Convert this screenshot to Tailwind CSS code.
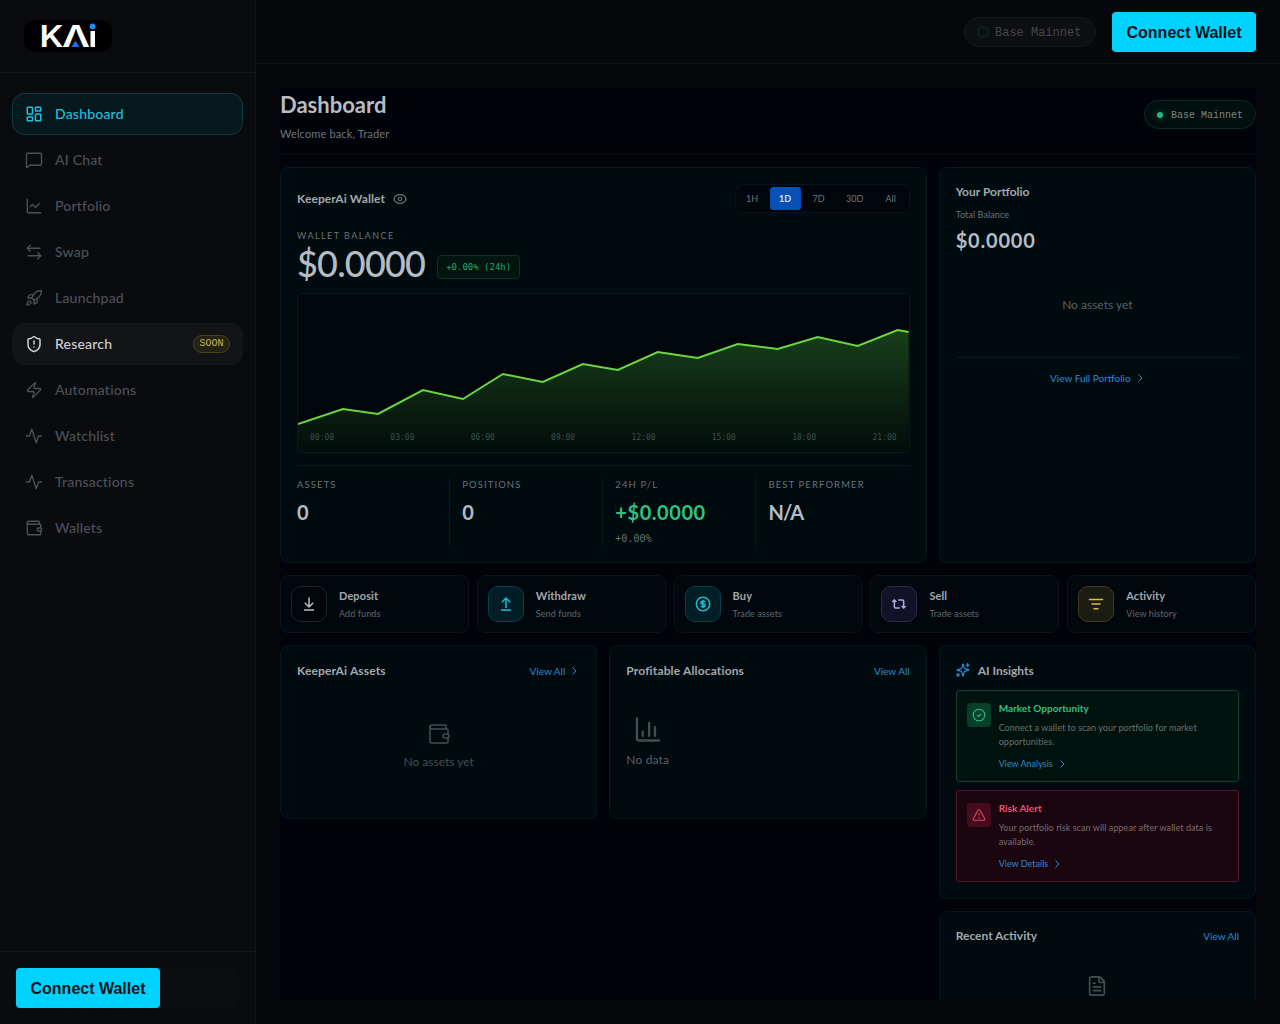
<!DOCTYPE html>
<html lang="en">
<head>
  <meta charset="UTF-8">
  <meta name="viewport" content="width=device-width, initial-scale=1.0">
  <title>KeeperAi Dashboard</title>
  <script src="https://cdn.jsdelivr.net/npm/@tailwindcss/browser@4"></script>
</head>
<body class="bg-[#07080b] font-[Lato,sans-serif] text-[#b4b9be]">
  <div class="flex h-[1024px] w-[1280px] overflow-hidden">

    <!-- Sidebar -->
    <aside class="flex w-64 shrink-0 flex-col border-r border-[#121419] bg-[#0a0b0f]">
      <div class="flex h-[73px] items-center border-b border-[#16181c] px-6">
        <div class="h-8 w-[88px] rounded-xl bg-black">
          <svg class="h-8 w-[88px] overflow-visible" viewBox="0 0 88 32" fill="#fff">
            <text x="15.500" y="27" font-family="Inter" font-weight="600" font-size="30" textLength="24" lengthAdjust="spacingAndGlyphs">K</text>
            <text x="38" y="27" font-family="Inter" font-weight="600" font-size="30" textLength="28" lengthAdjust="spacingAndGlyphs">Λ</text>
            <rect x="66.500" y="11" width="4.500" height="16"/>
            <circle cx="68.600" cy="6.400" r="2.800" fill="#1f8bf5"/>
            <path d="M51.500 20.500l4 6.500h-8z" fill="#1d6fe8"/>
          </svg>
        </div>
      </div>
      <nav class="flex flex-1 flex-col gap-1 px-3 pt-5 text-sm font-medium tracking-[.2px] text-[#4c5157]">
        <a class="flex h-[42px] items-center gap-3 rounded-xl border border-[#0c3a41] bg-[#08191e] px-3 text-[#1fc0de]">
          <svg class="size-[18px]" viewBox="0 0 24 24" fill="none" stroke="currentColor" stroke-width="2"><rect x="3" y="3" width="7" height="9" rx="1"/><rect x="14" y="3" width="7" height="5" rx="1"/><rect x="14" y="12" width="7" height="9" rx="1"/><rect x="3" y="16" width="7" height="5" rx="1"/></svg>
          <span>Dashboard</span>
        </a>
        <a class="flex h-[42px] items-center gap-3 px-[13px]">
          <svg class="size-[18px]" viewBox="0 0 24 24" fill="none" stroke="currentColor" stroke-width="1.8" stroke-linejoin="round"><path d="M22 17a2 2 0 0 1-2 2H6.800a2 2 0 0 0-1.400.6l-2.200 2.200A.7.7 0 0 1 2 21.300V5a2 2 0 0 1 2-2h16a2 2 0 0 1 2 2z"/></svg>
          <span>AI Chat</span>
        </a>
        <a class="flex h-[42px] items-center gap-3 px-[13px]">
          <svg class="size-[18px]" viewBox="0 0 24 24" fill="none" stroke="currentColor" stroke-width="1.8" stroke-linecap="round" stroke-linejoin="round"><path d="M3 3v16a2 2 0 0 0 2 2h16"/><path d="m19 9-5 5-4-4-3 3"/></svg>
          <span>Portfolio</span>
        </a>
        <a class="flex h-[42px] items-center gap-3 px-[13px]">
          <svg class="size-[18px]" viewBox="0 0 24 24" fill="none" stroke="currentColor" stroke-width="1.8" stroke-linecap="round" stroke-linejoin="round"><path d="M7 3 3 7l4 4"/><path d="M3 7h17"/><path d="m17 21 4-4-4-4"/><path d="M21 17H4"/></svg>
          <span>Swap</span>
        </a>
        <a class="flex h-[42px] items-center gap-3 px-[13px]">
          <svg class="size-[18px]" viewBox="0 0 24 24" fill="none" stroke="currentColor" stroke-width="1.8" stroke-linecap="round" stroke-linejoin="round"><path d="M4.500 16.500c-1.500 1.260-2 5-2 5s3.740-.5 5-2c.71-.84.7-2.130-.09-2.910a2.180 2.180 0 0 0-2.910-.09z"/><path d="m12 15-3-3a22 22 0 0 1 2-3.950A12.880 12.880 0 0 1 22 2c0 2.720-.78 7.500-6 11a22.350 22.350 0 0 1-4 2z"/><path d="M9 12H4s.55-3.030 2-4c1.620-1.080 5 0 5 0"/><path d="M12 15v5s3.030-.55 4-2c1.080-1.620 0-5 0-5"/></svg>
          <span>Launchpad</span>
        </a>
        <a class="flex h-[42px] items-center gap-3 rounded-xl bg-[#131418] px-[13px] text-[#d0d2d4]">
          <svg class="size-[18px]" viewBox="0 0 24 24" fill="none" stroke="currentColor" stroke-width="2" stroke-linecap="round" stroke-linejoin="round"><path d="M20 13c0 5-3.500 7.500-7.660 8.950a1 1 0 0 1-.67-.01C7.500 20.500 4 18 4 13V6a1 1 0 0 1 1-1c2 0 4.500-1.200 6.240-2.720a1.170 1.170 0 0 1 1.520 0C14.510 3.810 17 5 19 5a1 1 0 0 1 1 1z"/><path d="M12 8v4"/><path d="M12 16h.01"/></svg>
          <span>Research</span>
          <span class="ml-auto flex h-[18px] w-[37px] items-center justify-center rounded-full border border-[#4c4213] bg-[#252213] pt-px font-['Liberation_Mono',monospace] text-[10px] tracking-normal text-[#c9b75c]">SOON</span>
        </a>
        <a class="flex h-[42px] items-center gap-3 px-[13px]">
          <svg class="size-[18px]" viewBox="0 0 24 24" fill="none" stroke="currentColor" stroke-width="1.8" stroke-linecap="round" stroke-linejoin="round"><path d="M4 14a1 1 0 0 1-.78-1.630l9.900-10.200a.5.5 0 0 1 .86.46l-1.920 6.020A1 1 0 0 0 13 10h7a1 1 0 0 1 .78 1.630l-9.900 10.200a.5.5 0 0 1-.86-.46l1.920-6.020A1 1 0 0 0 11 14z"/></svg>
          <span>Automations</span>
        </a>
        <a class="flex h-[42px] items-center gap-3 px-[13px]">
          <svg class="size-[18px]" viewBox="0 0 24 24" fill="none" stroke="currentColor" stroke-width="1.8" stroke-linecap="round" stroke-linejoin="round"><path d="M22 12h-4l-3 9L9 3l-3 9H2"/></svg>
          <span>Watchlist</span>
        </a>
        <a class="flex h-[42px] items-center gap-3 px-[13px]">
          <svg class="size-[18px]" viewBox="0 0 24 24" fill="none" stroke="currentColor" stroke-width="1.8" stroke-linecap="round" stroke-linejoin="round"><path d="M22 12h-4l-3 9L9 3l-3 9H2"/></svg>
          <span>Transactions</span>
        </a>
        <a class="flex h-[42px] items-center gap-3 px-[13px]">
          <svg class="size-[18px]" viewBox="0 0 24 24" fill="none" stroke="currentColor" stroke-width="1.8" stroke-linecap="round" stroke-linejoin="round"><path d="M19 7V4a1 1 0 0 0-1-1H5a2 2 0 0 0 0 4h15a1 1 0 0 1 1 1v4h-3a2 2 0 0 0 0 4h3a1 1 0 0 0 1-1v-2a1 1 0 0 0-1-1"/><path d="M3 5v14a2 2 0 0 0 2 2h15a1 1 0 0 0 1-1v-4"/></svg>
          <span>Wallets</span>
        </a>
      </nav>
      <div class="flex h-[73px] border-t border-[#16181c] p-4">
        <div class="h-10 w-full rounded-lg bg-[#0c0d11]">
          <button class="h-10 w-36 rounded bg-[#00d2ff] pt-0.5 font-['Liberation_Sans',sans-serif] text-base font-bold text-[#06141c]">Connect Wallet</button>
        </div>
      </div>
    </aside>

    <div class="flex flex-1 flex-col">
      <!-- Top bar -->
      <header class="flex h-16 shrink-0 items-center justify-end gap-4 border-b border-[#111317] px-6">
        <div class="flex h-[30px] w-[132px] items-center gap-1.5 rounded-full border border-[#16181b] bg-[#0e0f12] pl-3 font-['Liberation_Mono',monospace] text-xs text-[#43464a]">
          <span class="size-3 rounded-full border-2 border-[#0b211c]"></span><span class="pt-0.5">Base Mainnet</span>
        </div>
        <button class="h-10 w-36 rounded bg-[#00d2ff] pt-0.5 font-['Liberation_Sans',sans-serif] text-base font-bold text-[#06141c]">Connect Wallet</button>
      </header>

      <main class="mx-6 mt-6 flex h-[912px] flex-col gap-3 overflow-hidden bg-[#00040a]">
        <div class="flex h-[67px] shrink-0 items-start justify-between border-b border-[#070c12]">
          <div>
            <h1 class="pt-px text-[22px] leading-8 font-bold text-[#b9bcc0]">Dashboard</h1>
            <p class="mt-[5px] text-[11px] leading-4 tracking-[.15px] text-[#6f7479]">Welcome back, Trader</p>
          </div>
          <div class="mt-3 flex h-[29px] w-28 items-center gap-2 rounded-full border border-[#0b2b20] bg-[#010f0e] pl-3 font-['Liberation_Mono',monospace] text-[10px] text-[#7d8583]">
            <span class="size-1.5 rounded-full bg-[#24b779] shadow-[0_0_6px_#0f6b45]"></span><span class="pt-px">Base Mainnet</span>
          </div>
        </div>

        <div class="grid shrink-0 grid-cols-3 gap-3">
          <!-- Wallet -->
          <section class="col-span-2 h-[396px] rounded-lg border border-[#07181c] bg-[#000b10] p-4">
            <div class="flex items-center justify-between">
              <h2 class="flex items-center gap-2 text-xs font-bold tracking-[.1px] text-[#a3a8ac]">KeeperAi Wallet
                <svg class="size-3.5 text-[#6b7378]" viewBox="0 0 24 24" fill="none" stroke="currentColor" stroke-width="2"><path d="M1.500 12C3 7 7.500 4.500 12 4.500S21 7 22.500 12C21 17 16.500 19.500 12 19.500S3 17 1.500 12z"/><circle cx="12" cy="12" r="3"/></svg>
              </h2>
              <div class="flex h-[29px] w-[175px] items-center rounded-lg border border-[#07151a] bg-[#00060b] text-[9px] text-[#70767b]">
                <span class="w-[34px] pr-px text-center">1H</span>
                <span class="flex h-[23px] w-[31px] items-center justify-center rounded-[3px] bg-[#0750b5] font-bold text-[#d6e0ec]">1D</span>
                <span class="w-9 text-center">7D</span>
                <span class="w-9 text-center">30D</span>
                <span class="w-9 text-center">All</span>
              </div>
            </div>
            <p class="mt-[15px] text-[9px] leading-4 tracking-[1.45px] text-[#6b7277]">WALLET BALANCE</p>
            <div class="flex h-10 items-center gap-3">
              <span class="-mt-0.5 text-4xl leading-10 font-medium tracking-[-.8px] text-[#b5bcc2]">$0.0000</span>
              <span class="mt-1.5 flex h-6 w-[83px] items-center justify-center rounded border border-[#0a3326] bg-[#01140f] pt-px font-['DejaVu_Sans_Mono',monospace] text-[9px] text-[#2aa870]">+0.00% (24h)</span>
            </div>
            <div class="relative mt-[9px] h-40 overflow-hidden rounded border border-[#07191c] bg-[#000609]">
              <svg class="h-[158px] w-full" viewBox="0 0 611 158" preserveAspectRatio="none" fill="none">
                <defs>
                  <linearGradient id="area" x1="0" y1="0" x2="0" y2="1">
                    <stop offset="0" stop-color="#52cc44" stop-opacity=".29"/>
                    <stop offset="1" stop-color="#52cc44" stop-opacity=".03"/>
                  </linearGradient>
                </defs>
                <path fill="url(#area)" d="M0 130 45 115 80 120 125 96 165 105 205 80 245 88 285 70 320 76 360 58 400 64 440 50 480 55 520 43 560 52 600 36 611 38V158H0z"/>
                <path stroke="#6cd63e" stroke-width="2" d="M0 130 45 115 80 120 125 96 165 105 205 80 245 88 285 70 320 76 360 58 400 64 440 50 480 55 520 43 560 52 600 36 611 38"/>
              </svg>
              <div class="absolute inset-x-3 bottom-[7px] flex justify-between font-['DejaVu_Sans_Mono',monospace] text-[8px] leading-[14px] text-[#3c4e4b]">
                <span>00:00</span><span>03:00</span><span>06:00</span><span>09:00</span><span>12:00</span><span>15:00</span><span>18:00</span><span>21:00</span>
              </div>
            </div>
            <div class="mt-3 grid grid-cols-4 border-t border-[#0a191d] pt-3 text-[9.5px] leading-[13px] text-[#6b7277]">
              <div class="h-[68px] border-r border-[#0c1a1f]"><p class="tracking-[1.1px]">ASSETS</p><p class="mt-[9px] text-xl leading-6 font-bold text-[#b5bcc2]">0</p></div>
              <div class="border-r border-[#0c1a1f] pl-3"><p class="tracking-[1.1px]">POSITIONS</p><p class="mt-[9px] text-xl leading-6 font-bold text-[#b5bcc2]">0</p></div>
              <div class="border-r border-[#0c1a1f] pl-3"><p class="tracking-[1.1px]">24H P/L</p><p class="mt-[9px] text-xl leading-6 font-bold tracking-[.55px] text-[#2fc17e]">+$0.0000</p><p class="mt-2 font-['DejaVu_Sans_Mono',monospace] text-[10px] leading-[14px]">+0.00%</p></div>
              <div class="pl-3"><p class="tracking-[1.1px]">BEST PERFORMER</p><p class="mt-[9px] text-xl leading-6 font-bold tracking-[-.9px] text-[#b5bcc2]">N/A</p></div>
            </div>
          </section>

          <!-- Portfolio -->
          <section class="rounded-lg border border-[#07181c] bg-[#000b10] px-4 pt-3.5">
            <h2 class="text-xs leading-5 font-bold text-[#a3a8ac]">Your Portfolio</h2>
            <p class="mt-1.5 text-[9px] leading-[14px] tracking-[.1px] text-[#6b7277]">Total Balance</p>
            <p class="mt-1.5 text-xl leading-6 font-bold tracking-[.8px] text-[#b5bcc2]">$0.0000</p>
            <p class="mt-[43px] text-center text-xs leading-5 text-[#5a6267]">No assets yet</p>
            <div class="mt-[42px] flex items-center justify-center gap-1 border-t border-[#0b191d] pt-[11px] text-[10px] leading-[18px] text-[#2b8ad4]">
              View Full Portfolio
              <svg class="size-2.5" viewBox="0 0 10 10" fill="none" stroke="currentColor"><path d="m3.500 1.500 3.500 3.500-3.500 3.500"/></svg>
            </div>
          </section>
        </div>

        <!-- Quick actions -->
        <div class="grid shrink-0 grid-cols-5 gap-2 text-[9px] leading-3 tracking-[.1px] text-[#61686f]">
          <div class="flex h-[58px] items-center gap-3 rounded-lg border border-[#091319] bg-[#01070d] px-2.5">
            <div class="flex size-9 items-center justify-center rounded-[10px] border border-[#1d2329] bg-[#01060c] text-[#b5bbc1]"><svg class="size-4" viewBox="0 0 16 16" fill="none" stroke="currentColor" stroke-width="1.5"><path d="M8 1.500v9M3.800 6.800 8 11l4.200-4.200M3 14h10"/></svg></div>
            <div><p class="mb-1 text-[11px] leading-4 font-bold text-[#a3a8ac]">Deposit</p><p>Add funds</p></div>
          </div>
          <div class="flex h-[58px] items-center gap-3 rounded-lg border border-[#091319] bg-[#01070d] px-2.5">
            <div class="flex size-9 items-center justify-center rounded-[10px] border border-[#05404c] bg-[#011e26] text-[#1fbad6]"><svg class="size-4" viewBox="0 0 16 16" fill="none" stroke="currentColor" stroke-width="1.5"><path d="M8 12V2.500M3.800 6.200 8 2l4.200 4.200M3 14h10"/></svg></div>
            <div><p class="mb-1 text-[11px] leading-4 font-bold text-[#a3a8ac]">Withdraw</p><p>Send funds</p></div>
          </div>
          <div class="flex h-[58px] items-center gap-3 rounded-lg border border-[#091319] bg-[#01070d] px-2.5">
            <div class="flex size-9 items-center justify-center rounded-[10px] border border-[#05404c] bg-[#011e26] text-[#1fbad6]"><svg class="size-4" viewBox="0 0 16 16" fill="none" stroke="currentColor" stroke-width="1.5"><circle cx="8" cy="8" r="6.700"/><path d="M10.500 5.500H7a1.250 1.250 0 0 0 0 2.500h2a1.250 1.250 0 0 1 0 2.500H5.500M8 12V4"/></svg></div>
            <div><p class="mb-1 text-[11px] leading-4 font-bold text-[#a3a8ac]">Buy</p><p>Trade assets</p></div>
          </div>
          <div class="flex h-[58px] items-center gap-3 rounded-lg border border-[#091319] bg-[#01070d] px-2.5">
            <div class="flex size-9 items-center justify-center rounded-[10px] border border-[#2b2947] bg-[#121227] text-[#b3a8e0]"><svg class="size-4" viewBox="0 0 24 24" fill="none" stroke="currentColor" stroke-width="2.3"><path d="m2 9 3-3 3 3"/><path d="M13 18H7a2 2 0 0 1-2-2V6"/><path d="m22 15-3 3-3-3"/><path d="M11 6h6a2 2 0 0 1 2 2v10"/></svg></div>
            <div><p class="mb-1 text-[11px] leading-4 font-bold text-[#a3a8ac]">Sell</p><p>Trade assets</p></div>
          </div>
          <div class="flex h-[58px] items-center gap-3 rounded-lg border border-[#091319] bg-[#01070d] px-2.5">
            <div class="flex size-9 items-center justify-center rounded-[10px] border border-[#433d17] bg-[#1b1c14] text-[#e0bb3a]"><svg class="size-4" viewBox="0 0 16 16" fill="none" stroke="currentColor" stroke-width="1.5"><path d="M.8 3.500h14.400M3.500 8h9M5.500 12.700h5"/></svg></div>
            <div><p class="mb-1 text-[11px] leading-4 font-bold text-[#a3a8ac]">Activity</p><p>View history</p></div>
          </div>
        </div>

        <div class="grid shrink-0 grid-cols-3 items-start gap-3">
          <section class="h-[174px] rounded-lg border border-[#07161b] bg-[#000a0f] p-4">
            <div class="flex items-center justify-between leading-[18px]">
              <h2 class="text-xs font-bold tracking-[.15px] text-[#a3a8ac]">KeeperAi Assets</h2>
              <a class="flex items-center gap-1 pr-px text-[10px] text-[#2b8ad4]">View All
                <svg class="size-2.5" viewBox="0 0 10 10" fill="none" stroke="currentColor"><path d="m3.500 1.500 3.500 3.500-3.500 3.500"/></svg></a>
            </div>
            <div class="mt-[42px] flex flex-col items-center text-[#444d53]">
              <svg class="size-6" viewBox="0 0 24 24" fill="none" stroke="currentColor" stroke-width="1.5" stroke-linecap="round" stroke-linejoin="round"><path d="M19 7V4a1 1 0 0 0-1-1H5a2 2 0 0 0 0 4h15a1 1 0 0 1 1 1v4h-3a2 2 0 0 0 0 4h3a1 1 0 0 0 1-1v-2a1 1 0 0 0-1-1"/><path d="M3 5v14a2 2 0 0 0 2 2h15a1 1 0 0 0 1-1v-4"/></svg>
              <p class="mt-2 text-xs leading-4">No assets yet</p>
            </div>
          </section>

          <section class="h-[174px] rounded-lg border border-[#07161b] bg-[#000a0f] p-4">
            <div class="flex items-center justify-between leading-[18px]">
              <h2 class="text-xs font-bold tracking-[.15px] text-[#a3a8ac]">Profitable Allocations</h2>
              <a class="text-[10px] text-[#2b8ad4]">View All</a>
            </div>
            <div class="mt-9 text-[#5a6267]">
              <svg class="ml-2 size-7 text-[#444d53]" viewBox="0 0 24 24" fill="none" stroke="currentColor" stroke-width="2" stroke-linecap="round" stroke-linejoin="round"><path d="M2.500 2v17a2 2 0 0 0 2 2H21.500"/><path d="M7.500 17v-3.500M13 17V6M18 17V9.500"/></svg>
              <p class="mt-2 text-xs leading-4 tracking-[.15px]">No data</p>
            </div>
          </section>

          <div class="flex flex-col gap-3">
            <section class="h-[254px] rounded-lg border border-[#07161b] bg-[#000a0f] p-4">
              <h2 class="flex items-center gap-2 text-xs leading-[18px] font-bold text-[#a3a8ac]">
                <svg class="-mt-0.5 size-3.5 text-[#2b8ad4]" viewBox="0 0 24 24" fill="none" stroke="currentColor" stroke-width="2.2" stroke-linecap="round" stroke-linejoin="round"><path d="M9.940 15.500A2 2 0 0 0 8.500 14.060l-6.130-1.580a.5.5 0 0 1 0-.96L8.500 9.940A2 2 0 0 0 9.940 8.500l1.580-6.130a.5.5 0 0 1 .96 0L14.060 8.500A2 2 0 0 0 15.500 9.940l6.130 1.580a.5.5 0 0 1 0 .96L15.500 14.060a2 2 0 0 0-1.440 1.440l-1.580 6.130a.5.5 0 0 1-.96 0z"/><path d="M20 1v5M22.500 3.500h-5"/><circle cx="3.500" cy="20.500" r="2"/></svg>
                AI Insights
              </h2>
              <div class="mt-2.5 flex h-[92px] gap-2 rounded-[3px] border border-[#0b4531] bg-[#00120d] px-2.5 pt-2.5">
                <div class="mt-0.5 flex size-6 items-center justify-center rounded bg-[#05402b] text-[#2fc17e]"><svg class="size-3.5" viewBox="0 0 24 24" fill="none" stroke="currentColor" stroke-width="1.8"><circle cx="12" cy="12" r="10"/><path d="m8.500 12 2.500 2.500 4.500-4.500"/></svg></div>
                <div class="text-[9px] leading-[14px] text-[#68736f]">
                  <h3 class="text-[10px] font-bold text-[#2fc17e]">Market Opportunity</h3>
                  <p class="mt-1.5 tracking-[.04px]">Connect a wallet to scan your portfolio for market<br>opportunities.</p>
                  <a class="mt-2 flex items-center gap-1 text-[#2b8ad4]">View Analysis<svg class="size-2.5" viewBox="0 0 10 10" fill="none" stroke="currentColor"><path d="m3.500 1.500 3.500 3.500-3.500 3.500"/></svg></a>
                </div>
              </div>
              <div class="mt-2 flex h-[92px] gap-2 rounded-[3px] border border-[#551a2c] bg-[#1b060f] px-2.5 pt-2.5">
                <div class="mt-0.5 flex size-6 items-center justify-center rounded bg-[#450b1f] text-[#e5486c]"><svg class="size-3.5" viewBox="0 0 24 24" fill="none" stroke="currentColor" stroke-width="1.8" stroke-linejoin="round"><path d="m21.730 18-8-14a2 2 0 0 0-3.460 0l-8 14A2 2 0 0 0 4 21h16a2 2 0 0 0 1.730-3z"/><path d="M12 9v4M12 16v2"/></svg></div>
                <div class="text-[9px] leading-[14px] text-[#7a6b71]">
                  <h3 class="text-[10px] font-bold text-[#ec5475]">Risk Alert</h3>
                  <p class="mt-1.5 tracking-[.06px]">Your portfolio risk scan will appear after wallet data is<br>available.</p>
                  <a class="mt-2 flex items-center gap-1 text-[#2b8ad4]">View Details<svg class="size-2.5" viewBox="0 0 10 10" fill="none" stroke="currentColor"><path d="m3.500 1.500 3.500 3.500-3.500 3.500"/></svg></a>
                </div>
              </div>
            </section>

            <section class="h-[174px] rounded-lg border border-[#07161b] bg-[#000a0f] px-4 pt-[15px]">
              <div class="flex items-center justify-between leading-[18px]">
                <h2 class="text-xs font-bold text-[#a3a8ac]">Recent Activity</h2>
                <a class="text-[10px] text-[#2b8ad4]">View All</a>
              </div>
              <svg class="mx-auto mt-[30px] size-[22px] text-[#444d53]" viewBox="0 0 24 24" fill="none" stroke="currentColor" stroke-width="1.8" stroke-linecap="round" stroke-linejoin="round"><path d="M15 2H6a2 2 0 0 0-2 2v16a2 2 0 0 0 2 2h12a2 2 0 0 0 2-2V7z"/><path d="M14 2v4a2 2 0 0 0 2 2h4M10 9H8M16 13H8M16 17H8"/></svg>
            </section>
          </div>
        </div>
      </main>
    </div>
  </div>
</body>
</html>
